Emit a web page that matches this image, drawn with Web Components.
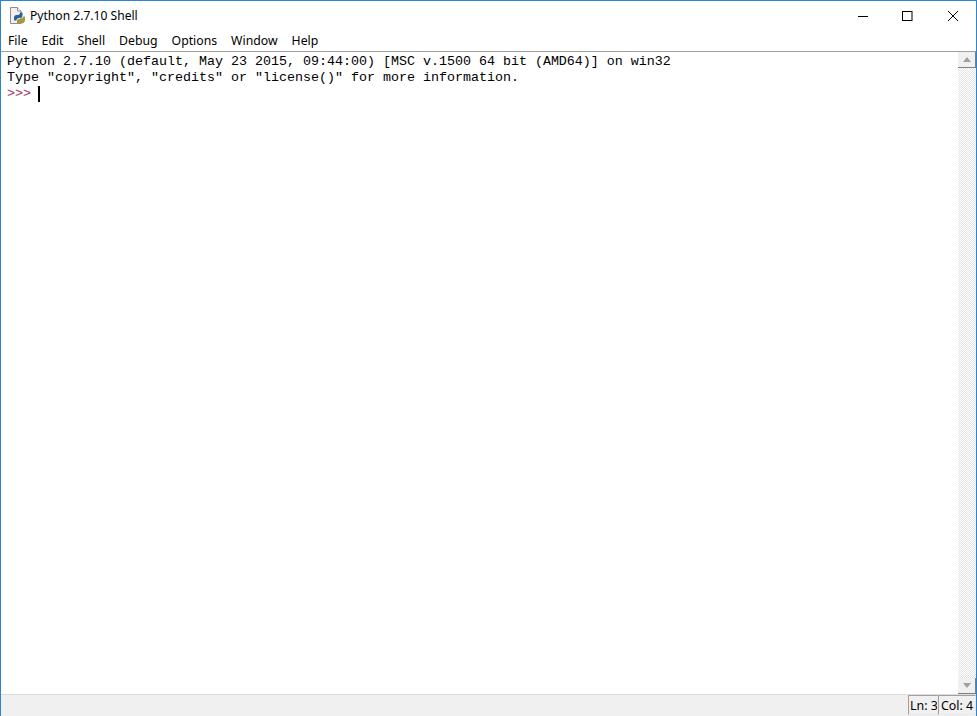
<!DOCTYPE html>
<html>
<head>
<meta charset="utf-8">
<title>Python 2.7.10 Shell</title>
<style>
  html, body { margin: 0; height: 100%; background: #fff; overflow: hidden; }
</style>
</head>
<body>
<idle-window>
  <title-bar slot="title">Python 2.7.10 Shell</title-bar>
  <menu-bar slot="menu"></menu-bar>
  <shell-view slot="shell"></shell-view>
  <status-bar slot="status"></status-bar>
</idle-window>
<script>
const font = '"Noto Sans", "Liberation Sans", sans-serif'

customElements.define('idle-window', class extends HTMLElement {
  constructor() {
    super()
    this.attachShadow({ mode: 'open' }).innerHTML = `
      <style>
        :host {
          display: flex;
          flex-direction: column;
          box-sizing: border-box;
          width: 977px;
          height: 716px;
          border: 1px solid #2b85cf;
          border-bottom: none;
          background: #fff;
        }
      </style>
      <slot name="title"></slot>
      <slot name="menu"></slot>
      <slot name="shell"></slot>
      <slot name="status"></slot>
    `
  }
})

customElements.define('title-bar', class extends HTMLElement {
  constructor() {
    super()
    this.attachShadow({ mode: 'open' }).innerHTML = `
      <style>
        :host {
          display: flex;
          align-items: center;
          height: 29px;
          flex: none;
          font: 12.1px ${font};
          color: #000;
        }
        .icon { width: 17px; height: 17px; margin: 0 4px 0 8px; flex: none; }
        .text { flex: 1; }
        .btn { width: 45px; height: 29px; display: flex; align-items: center; justify-content: center; }
        .btn svg { width: 12px; height: 12px; }
        .btns { display: flex; margin-right: 1px; }
      </style>
      <svg class="icon" viewBox="0 0 17 17">
        <path d="M1.500 .5h7l3.500 3.500v12.500h-10.500z" fill="#f0f0f0" stroke="#8c8c8c"/>
        <path d="M8.500 .5v3.500h3.500" fill="#fff" stroke="#8c8c8c"/>
        <path d="M5 10.500c0-2 1.500-2.500 3.500-2.500s2.500-1 2.500-2.500h2.500v3c0 1.700-1.200 2.500-3 2.500s-3 .7-3 2.500H5z" fill="#2d5f9e"/>
        <path d="M8 16.500v-2.500c0-1.500 1.200-2 3-2s3-1 3-2.500h2v3.500c0 2.200-1.500 3.500-3.500 3.500z" fill="#a89a3c"/>
      </svg>
      <span class="text"><slot></slot></span>
      <div class="btns">
        <div class="btn"><svg viewBox="0 0 12 12"><path d="M1 6.500h10" stroke="#000" stroke-width="1"/></svg></div>
        <div class="btn"><svg viewBox="0 0 12 12"><rect x=".5" y="1.500" width="9.500" height="9" fill="none" stroke="#000"/></svg></div>
        <div class="btn"><svg viewBox="0 0 12 12"><path d="M1 1l10 10M11 1L1 11" stroke="#000" fill="none"/></svg></div>
      </div>
    `
  }
})

customElements.define('menu-bar', class extends HTMLElement {
  constructor() {
    super()
    const items = ['File', 'Edit', 'Shell', 'Debug', 'Options', 'Window', 'Help']
    this.attachShadow({ mode: 'open' }).innerHTML = `
      <style>
        :host {
          display: flex;
          align-items: center;
          gap: 14px;
          height: 21px;
          flex: none;
          padding-left: 7px;
          border-bottom: 1px solid #a0a0a0;
          font: 12.25px ${font};
          color: #000;
        }
      </style>
      ${items.map(i => `<span>${i}</span>`).join('')}
    `
  }
})

customElements.define('shell-view', class extends HTMLElement {
  constructor() {
    super()
    this.attachShadow({ mode: 'open' }).innerHTML = `
      <style>
        :host { display: flex; flex: 1; min-height: 0; }
        .text {
          flex: 1;
          padding: 2px 0 0 6px;
          font: 13.33px/16px "Liberation Mono", monospace;
          color: #000;
          white-space: pre;
        }
        .prompt { color: #a8325f; }
        .caret { display: inline-block; width: 2px; height: 16px; background: #000; vertical-align: top; margin-left: -1px; }
        .bar {
          width: 18px;
          flex: none;
          display: flex;
          flex-direction: column;
          background: repeating-conic-gradient(#e4e4e4 0 25%, #fff 0 50%) 0 0 / 2px 2px;
        }
        .arrow {
          height: 15px;
          background: #f0f0f0;
          border-right: 1px solid #808080;
          border-bottom: 1px solid #808080;
          display: flex;
          align-items: center;
          justify-content: center;
          flex: none;
        }
        .track { flex: 1; }
        .up { width: 0; height: 0; border: 4px solid transparent; border-top: none; border-bottom: 5px solid #a0a0a0; }
        .down { width: 0; height: 0; border: 4px solid transparent; border-bottom: none; border-top: 5px solid #a0a0a0; }
      </style>
      <div class="text">Python 2.7.10 (default, May 23 2015, 09:44:00) [MSC v.1500 64 bit (AMD64)] on win32
Type "copyright", "credits" or "license()" for more information.
<span class="prompt">&gt;&gt;&gt;</span> <span class="caret"></span></div>
      <div class="bar">
        <div class="arrow"><div class="up"></div></div>
        <div class="track"></div>
        <div class="arrow"><div class="down"></div></div>
      </div>
    `
  }
})

customElements.define('status-bar', class extends HTMLElement {
  constructor() {
    super()
    this.attachShadow({ mode: 'open' }).innerHTML = `
      <style>
        :host {
          display: flex;
          justify-content: flex-end;
          align-items: flex-start;
          height: 22px;
          flex: none;
          background: #f0f0f0;
          border-top: 1px solid #dcdcdc;
          box-sizing: border-box;
          font: 12.4px ${font};
          color: #000;
        }
        span {
          box-sizing: border-box;
          height: 20px;
          line-height: 20px;
          border-top: 1px solid #a0a0a0;
          border-left: 1px solid #a0a0a0;
          border-right: 1px solid #e8e8e8;
          border-bottom: 1px solid #e8e8e8;
          padding: 0 0 0 1px;
          white-space: nowrap;
          overflow: hidden;
        }
        .ln { width: 30px; }
        .col { width: 38px; padding-left: 2px; }
      </style>
      <span class="ln">Ln: 3</span><span class="col">Col: 4</span>
    `
  }
})
</script>
</body>
</html>
